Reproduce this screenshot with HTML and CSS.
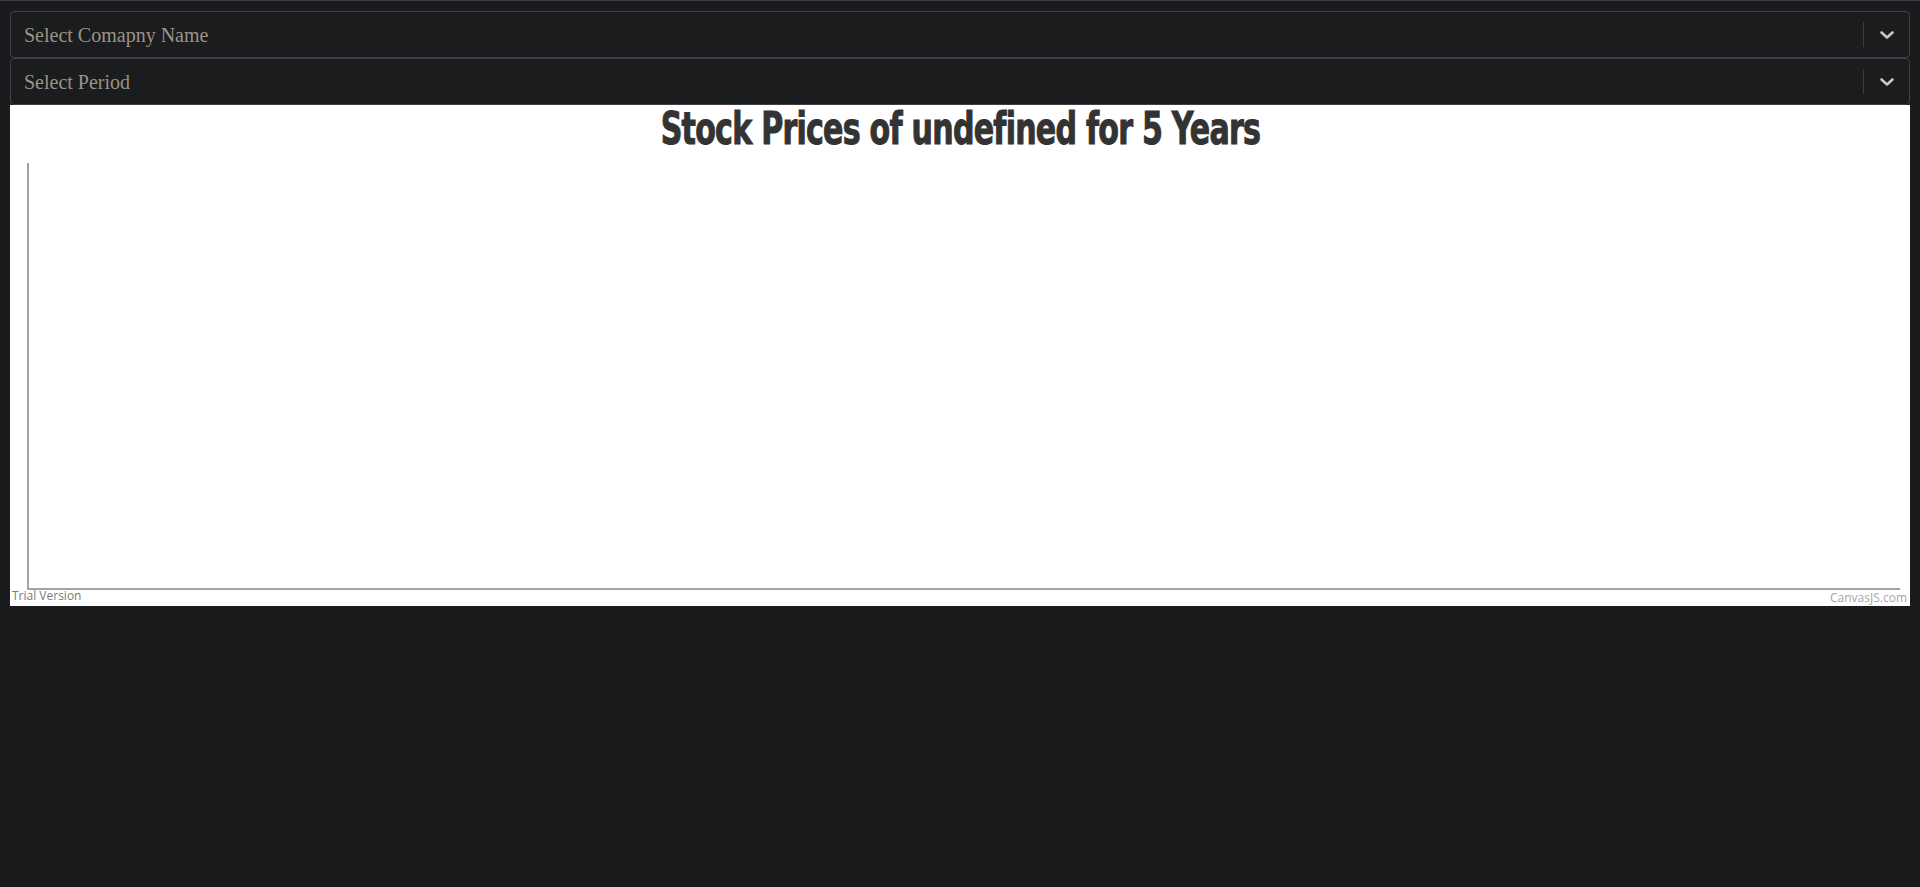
FILE: index.html
```html
<!DOCTYPE html>
<html>
<head>
<meta charset="utf-8">
<link rel="stylesheet" href="styles.css">
</head>
<body>
<div class="topline"></div>
<main class="page">
  <div class="select">
    <span class="placeholder">Select Comapny Name</span>
    <span class="indicators">
      <span class="sep"></span>
      <svg class="chev" width="20" height="20" viewBox="0 0 20 20"><path d="M4.5 7.5 L10 12.5 L15.5 7.5" fill="none" stroke="currentColor" stroke-width="2.6" stroke-linecap="round" stroke-linejoin="round"/></svg>
    </span>
  </div>
  <div class="select">
    <span class="placeholder">Select Period</span>
    <span class="indicators">
      <span class="sep"></span>
      <svg class="chev" width="20" height="20" viewBox="0 0 20 20"><path d="M4.5 7.5 L10 12.5 L15.5 7.5" fill="none" stroke="currentColor" stroke-width="2.6" stroke-linecap="round" stroke-linejoin="round"/></svg>
    </span>
  </div>
  <section class="chart">
    <h1 class="title"><span class="title-text">Stock Prices of undefined for 5 Years</span></h1>
    <div class="plot"></div>
    <div class="footer">
      <span class="trial">Trial Version</span>
      <span class="credit">CanvasJS.com</span>
    </div>
  </section>
</main>
</body>
</html>
```

FILE: styles.css
```css
html, body {
  margin: 0;
  padding: 0;
  background: #1a1b1d;
}
body {
  height: 887px;
  overflow: hidden;
}
.topline {
  height: 1px;
  background: #3c3d40;
}
.page {
  padding: 10px 10px 0 10px;
  display: flex;
  flex-direction: column;
}
.select {
  box-sizing: border-box;
  height: 47px;
  display: flex;
  align-items: center;
  justify-content: space-between;
  background: #1b1c1e;
  border: 1px solid #3e4043;
  border-radius: 4px;
  padding-left: 13px;
}
.placeholder {
  font-family: "Liberation Serif", "Times New Roman", serif;
  font-size: 20px;
  color: #9b9385;
  padding-top: 1px;
}
.indicators {
  display: flex;
  align-items: center;
  height: 100%;
}
.sep {
  width: 1px;
  height: 25px;
  background: #3a3c3f;
  margin-right: 13px;
}
.chev {
  color: #ccc7bf;
  margin-right: 12px;
}
.chart {
  background: #ffffff;
  height: 501px;
  display: flex;
  flex-direction: column;
}
.title {
  margin: 0;
  height: 43px;
  padding-top: 2px;
  text-align: center;
  font-family: Impact, "DejaVu Sans Condensed", sans-serif;
  font-weight: bold;
  font-size: 44px;
  line-height: 44px;
  color: #333333;
}
.title-text {
  display: inline-block;
  transform: scaleX(0.76);
  letter-spacing: -1px;
  -webkit-text-stroke: 1px #333333;
}
.plot {
  margin: 13px 10px 0 17px;
  flex: 1;
  border-left: 2px solid #a3a3a3;
  border-bottom: 2px solid #a3a3a3;
}
.footer {
  height: 16px;
  display: flex;
  justify-content: space-between;
  align-items: flex-start;
  padding: 0 3px 0 2px;
  font-family: "Open Sans", "Noto Sans", sans-serif;
  font-size: 12px;
  line-height: 13px;
}
.trial {
  color: #7a7a7a;
  margin-top: -1px;
}
.credit {
  color: #a5a5a5;
  margin-top: 1px;
}
```
